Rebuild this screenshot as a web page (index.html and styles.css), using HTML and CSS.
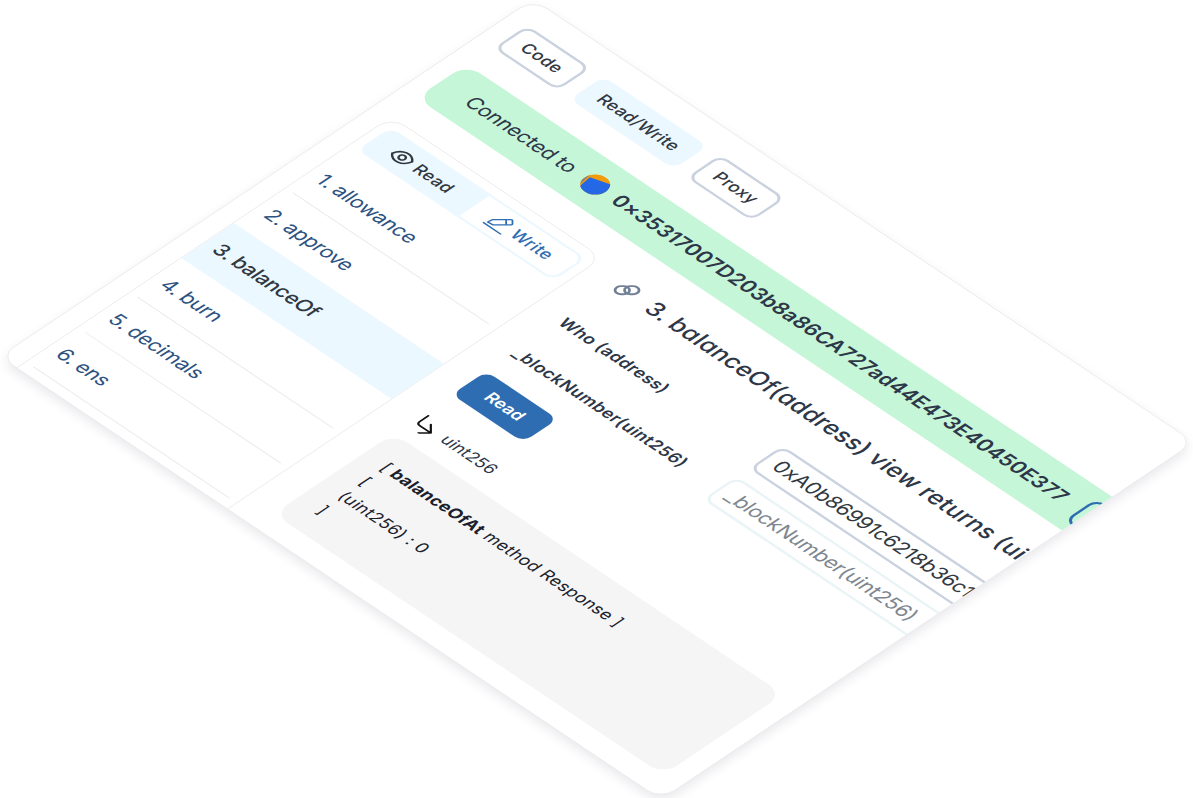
FILE: index.html
```
<!DOCTYPE html>
<html lang="en">
<head>
	<meta charset="UTF-8">
	<title>Contract</title>
	<link rel="stylesheet" href="styles.css">
</head>
<body>
	<div class="card">
		<ul class="tabs">
			<li class="tab">Code</li>
			<li class="tab active">Read/Write</li>
			<li class="tab">Proxy</li>
		</ul>
		<div class="banner">
			<span class="label">Connected to</span>
			<svg class="avatar" width="30" height="30" viewBox="0 0 30 30">
				<clipPath id="round"><circle cx="15" cy="15" r="15"/></clipPath>
				<g clip-path="url(#round)">
					<rect width="30" height="30" fill="#f29c0c"/>
					<path d="M0 0L1.5 10L4.5 30H0z" fill="#8a8378"/>
					<path d="M3.5 11L26 4L40 30H6z" fill="#2468e5"/>
				</g>
			</svg>
			<span class="address">0×35317007D203b8a86CA727ad44E473E40450E377</span>
			<a class="more" href="#"></a>
		</div>
		<div class="content">
			<div class="side">
				<div class="toggle">
					<a class="read" href="#">
						<svg width="28" height="28" viewBox="0 0 24 24" fill="none" stroke="#32383f" stroke-width="2.1"><g transform="rotate(-12 12 12)"><path d="M1.8 12C4 7.6 7.6 5 12 5s8 2.6 10.2 7C20 16.4 16.4 19 12 19S4 16.4 1.8 12z"/><circle cx="12" cy="12" r="3.2"/></g></svg>
						<span>Read</span>
					</a>
					<a class="write" href="#">
						<svg width="28" height="28" viewBox="0 0 28 28" fill="none" stroke="#2f6db3" stroke-width="1.8" stroke-linejoin="round"><path d="M4.5 21.5L5.5 15.5L18.5 2.5Q19.5 1.5 20.5 2.5L24 6Q25 7 24 8L11 21z"/><path d="M15 6L20.5 11.5M1.5 25.2H27"/></svg>
						<span>Write</span>
					</a>
				</div>
				<ul class="list">
					<li>1. allowance</li>
					<li class="last">2. approve</li>
					<li class="active">3. balanceOf</li>
					<li>4. burn</li>
					<li>5. decimals</li>
					<li>6. ens</li>
				</ul>
			</div>
			<div class="main">
				<h2>
					<svg width="28" height="28" viewBox="0 0 28 28" fill="none" stroke="#718096" stroke-width="2.8"><g transform="rotate(-45 14 14)"><rect x="2" y="8" width="14.5" height="12" rx="6"/><rect x="11.5" y="8" width="14.5" height="12" rx="6"/></g></svg>
					<span>3. balanceOf(address) view returns (uint256)</span>
				</h2>
				<div class="row">
					<span class="name">Who (address)</span>
					<span class="input">0xA0b86991c6218b36c1d19D4a2e9Eb0cE3606eB48</span>
				</div>
				<div class="row">
					<span class="name">_blockNumber(uint256)</span>
					<span class="input empty">_blockNumber(uint256)</span>
				</div>
				<a class="submit" href="#">Read</a>
				<div class="result">
					<svg width="24" height="28" viewBox="0 0 24 28" fill="none" stroke="#111" stroke-width="2.2" stroke-linecap="round" stroke-linejoin="round"><path d="M2 2V14Q2 18.5 6.5 18.5H22M13 9.5L22 18.5L13 27.5"/></svg>
					<span>uint256</span>
				</div>
				<div class="response">
					<p>[ <b>balanceOfAt</b> method Response ]</p>
					<p>[</p>
					<p>(uint256) : 0</p>
					<p>]</p>
				</div>
			</div>
		</div>
	</div>
</body>
</html>
```
FILE: styles.css
```
*{ margin:0; padding:0; box-sizing:border-box; }
li{ list-style:none; }
a{ text-decoration:none; }
svg{ flex:none; display:block; }

html,body{ height:100%; overflow:hidden; }
body{ background:#fff; font-family:Inter, "Liberation Sans", sans-serif; font-size:20px; letter-spacing:0.35px; color:#2d3748; }

/* isometric card */
.card{ width:936px; height:755px; padding:31px 0 0 21px; border:1px solid #ebebeb; border-radius:20px; background:#fff; overflow:hidden; box-shadow:5px 5px 12px rgba(40,40,80,0.1); transform-origin:0 0; transform:matrix(0.7071,0.4738,-0.7071,0.4738,533,-1.2); white-space:nowrap; }

.tabs{ display:flex; gap:18px; margin-left:2px; }
.tab{ height:48px; padding:0 15px; border:3px solid #cbd2df; border-radius:12px; line-height:42px; font-weight:500; letter-spacing:0.25px; color:#32383f; }
.tab:first-child{ padding:0 16px; }
.tabs .active{ padding:0 16px; border-color:#ebf8ff; background:#ebf8ff; }

.banner{ display:flex; align-items:center; width:1100px; height:71px; margin-top:36px; padding-left:39px; border-radius:20px; background:#c6f6d8; font-size:24px; letter-spacing:-0.4px; }
.banner .avatar{ margin:0 13px 0 16px; }
.banner .address{ width:637px; font-weight:600; letter-spacing:0.1px; }
.banner .more{ width:120px; height:46px; margin-left:21px; border:3px solid #2f6db3; border-radius:12px; }

.content{ display:flex; align-items:flex-start; margin:37px 0 0 2px; }
.side{ flex:none; width:299px; height:600px; padding:11px 10px; border:1px solid #ebebeb; border-radius:20px; }
.toggle{ display:flex; height:48px; border-radius:13px; overflow:hidden; font-weight:500; }
.toggle a{ display:flex; align-items:center; justify-content:center; gap:6px; }
.toggle .read{ width:142px; padding-right:7px; background:#ebf8ff; color:#32383f; }
.toggle .write{ flex:1; padding-right:2px; border:3px solid #ebf8ff; border-left:0; border-radius:0 13px 13px 0; color:#2f6db3; }
.list{ margin-top:17px; font-size:24px; letter-spacing:-0.4px; color:#2c5282; }
.list li{ height:73.5px; padding-left:3px; border-bottom:1px solid #e6e6e6; line-height:75px; }
.list .last{ border-color:#fff; }
.list .active{ margin:0 -10px; padding-left:13px; border-color:#ebf8ff; background:#ebf8ff; font-weight:500; color:#32383f; }

.main{ flex:none; width:551px; margin-left:37px; }
.main h2{ display:flex; align-items:center; gap:18px; height:34px; font-size:28px; font-weight:500; letter-spacing:0.3px; font-feature-settings:"cv11"; }
.main .row{ display:flex; align-items:center; height:48px; margin-top:17px; }
.main h2 + .row{ margin-top:37px; }
.row .name{ flex:none; width:288px; font-weight:600; letter-spacing:0.42px; }
.row .input{ flex:none; width:500px; height:48px; padding-left:12px; border:3px solid #cbd2df; border-radius:12px; line-height:42px; font-size:24px; letter-spacing:-0.2px; color:#32383f; }
.row .empty{ padding-left:10px; border-color:#e9f4f7; letter-spacing:-0.3px; color:#7e8790; }
.submit{ display:block; width:101px; height:49px; margin-top:18px; border-radius:12px; background:#2f6db3; line-height:49px; text-align:center; font-weight:600; letter-spacing:0; color:#fff; }
.result{ display:flex; align-items:center; gap:12px; height:30px; margin-top:36px; padding-left:4px; letter-spacing:0; }
.response{ height:170px; margin-top:16px; padding:26px 27px; border-radius:20px; background:#f5f5f5; line-height:30px; color:#1a202c; }
```
